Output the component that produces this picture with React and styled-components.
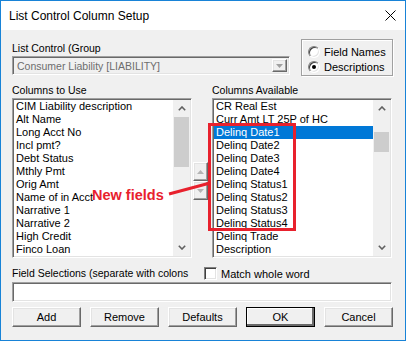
import React from "react";
import styled, { createGlobalStyle } from "styled-components";

const GlobalStyle = createGlobalStyle`
  body {
    margin: 0;
    background: #ffffff;
  }
`;

const sunken = `
  border-top: 1px solid #a0a0a0;
  border-left: 1px solid #a0a0a0;
  border-bottom: 1px solid #ffffff;
  border-right: 1px solid #ffffff;
  box-shadow: inset 1px 1px 0 #696969, inset -1px -1px 0 #e3e3e3;
`;

const raised = `
  border-top: 1px solid #ffffff;
  border-left: 1px solid #ffffff;
  border-bottom: 1px solid #696969;
  border-right: 1px solid #696969;
  box-shadow: inset -1px -1px 0 #a0a0a0, inset 1px 1px 0 #e3e3e3;
`;

const Window = styled.div`
  position: relative;
  width: 406px;
  height: 341px;
  box-sizing: border-box;
  border: 1px solid #1883d7;
  background: #f0f0f0;
  font-family: "Liberation Sans", Arial, sans-serif;
  font-size: 10.5px;
  color: #000;
`;

const TitleBar = styled.div`
  display: flex;
  align-items: center;
  height: 29px;
  padding: 0 9px 0 8px;
  background: #ffffff;
  font-size: 12px;
`;

const CloseIcon = styled.svg`
  margin-left: auto;
  width: 11px;
  height: 11px;
`;

const Body = styled.div`
  padding: 9px 0 0 11px;
`;

const TopRow = styled.div`
  display: flex;
  height: 37px;
`;

const LeftCol = styled.div`
  display: flex;
  flex-direction: column;
  width: 278px;
  padding-top: 3px;
`;

const Label = styled.div`
  height: 14px;
  line-height: 13px;
  white-space: nowrap;
`;

const Combo = styled.div`
  display: flex;
  align-items: center;
  box-sizing: border-box;
  height: 19px;
  padding: 0 2px 0 4px;
  color: #6d6d6d;
  ${sunken}
`;

const ComboButton = styled.div`
  display: flex;
  align-items: center;
  justify-content: center;
  box-sizing: border-box;
  margin-left: auto;
  width: 15px;
  height: 13px;
  background: #f0f0f0;
  ${raised}
`;

const GroupBox = styled.div`
  box-sizing: border-box;
  margin-left: 11px;
  width: 92px;
  height: 37px;
  padding: 4px 0 0 6px;
  border: 1px solid #a0a0a0;
  box-shadow: inset 1px 1px 0 #ffffff, 1px 1px 0 #ffffff;
`;

const RadioRow = styled.div`
  display: flex;
  align-items: center;
  gap: 4px;
  height: 15px;
  white-space: nowrap;
  font-size: 11px;
`;

const RadioCircle = styled.span`
  display: flex;
  align-items: center;
  justify-content: center;
  box-sizing: border-box;
  width: 12px;
  height: 12px;
  border-radius: 50%;
  background: #ffffff;
  border: 1px solid;
  border-color: #808080 #ffffff #ffffff #808080;
  box-shadow: inset 1px 1px 0 #404040, inset -1px -1px 0 #e3e3e3;

  &::after {
    content: "";
    width: 4px;
    height: 4px;
    border-radius: 50%;
    background: ${(p) => (p.$checked ? "#000" : "transparent")};
  }
`;

const ListsGrid = styled.div`
  display: grid;
  grid-template-columns: 180px 20px 180px;
  grid-template-rows: 14px 160px;
  margin-top: 8px;
`;

const ListBox = styled.div`
  display: flex;
  box-sizing: border-box;
  height: 160px;
  background: #ffffff;
  ${sunken}
  padding: 1px;
`;

const ListItems = styled.div`
  flex: 1;
  overflow: hidden;
`;

const Item = styled.div`
  height: 13px;
  line-height: 13px;
  padding-left: 2px;
  white-space: nowrap;
  font-size: 11px;
  background: ${(p) => (p.$selected ? "#0078d7" : "transparent")};
  color: ${(p) => (p.$selected ? "#ffffff" : "#000")};
`;

const ScrollBar = styled.div`
  display: flex;
  flex-direction: column;
  width: 17px;
  background: #f0f0f0;
`;

const ScrollArrow = styled.div`
  display: flex;
  align-items: center;
  justify-content: center;
  height: 17px;
`;

const Track = styled.div`
  flex: 1;
  padding-top: ${(p) => p.$offset}px;
`;

const Thumb = styled.div`
  height: ${(p) => p.$size}px;
  margin: 0 1px;
  background: #cdcdcd;
`;

const MoveCol = styled.div`
  display: flex;
  flex-direction: column;
  padding: 64px 0 0 1px;
`;

const MoveButton = styled.div`
  display: flex;
  align-items: center;
  justify-content: center;
  box-sizing: border-box;
  width: 15px;
  height: 19px;
  background: #f0f0f0;
  ${raised}
`;

const FieldRow = styled.div`
  display: flex;
  align-items: flex-start;
  height: 20px;
  margin-top: 4px;
`;

const FieldLabel = styled.div`
  width: 180px;
  height: 15px;
  margin-top: 5px;
  line-height: 13px;
  overflow: hidden;
`;

const CheckLabel = styled.label`
  display: flex;
  align-items: center;
  gap: 4px;
  margin: 5px 0 0 12px;
  font-size: 11px;
`;

const CheckBox = styled.span`
  box-sizing: border-box;
  width: 13px;
  height: 13px;
  background: #ffffff;
  border: 1px solid;
  border-color: #808080 #ffffff #ffffff #808080;
  box-shadow: inset 1px 1px 0 #404040, inset -1px -1px 0 #e3e3e3;
`;

const TextInput = styled.div`
  box-sizing: border-box;
  width: 380px;
  height: 20px;
  background: #ffffff;
  ${sunken}
`;

const ButtonRow = styled.div`
  display: flex;
  justify-content: space-between;
  width: 381px;
  margin-top: 5px;
`;

const Button = styled.div`
  display: flex;
  align-items: center;
  justify-content: center;
  box-sizing: border-box;
  width: 69px;
  height: 20px;
  background: #f0f0f0;
  font-size: 11px;
  ${raised}
  ${(p) =>
    p.$default &&
    `
    outline: 1px solid #000;
    outline-offset: -1px;
    box-shadow: inset -2px -2px 0 #696969, inset 1px 1px 0 #ffffff;
  `}
`;

const MarkBox = styled.div`
  position: absolute;
  left: 207px;
  top: 122px;
  width: 88px;
  height: 108px;
  box-sizing: border-box;
  border: 3px solid #e8212d;
`;

const MarkText = styled.div`
  position: absolute;
  left: 91px;
  top: 186px;
  font-size: 14.5px;
  font-weight: bold;
  line-height: 16px;
  color: #e8212d;
  white-space: nowrap;
`;

const MarkArrow = styled.svg`
  position: absolute;
  left: 165px;
  top: 178px;
  width: 45px;
  height: 20px;
  overflow: visible;
`;

const Chevron = ({ down }) => (
  <svg width="8" height="5" viewBox="0 0 8 5">
    <polyline
      points={down ? "0.8,0.8 4,4 7.2,0.8" : "0.8,4.2 4,1 7.2,4.2"}
      fill="none"
      stroke="#606060"
      strokeWidth="1.6"
    />
  </svg>
);

const Triangle = ({ down, color = "#a0a0a0" }) => (
  <svg width="7" height="4" viewBox="0 0 7 4">
    <polygon points={down ? "0,0 7,0 3.5,4" : "0,4 7,4 3.5,0"} fill={color} />
  </svg>
);

function List({ items, selected, thumbOffset, thumbSize }) {
  return (
    <ListBox>
      <ListItems>
        {items.map((it) => (
          <Item key={it} $selected={it === selected}>
            {it}
          </Item>
        ))}
      </ListItems>
      <ScrollBar>
        <ScrollArrow>
          <Chevron />
        </ScrollArrow>
        <Track $offset={thumbOffset}>
          <Thumb $size={thumbSize} />
        </Track>
        <ScrollArrow>
          <Chevron down />
        </ScrollArrow>
      </ScrollBar>
    </ListBox>
  );
}

const usedColumns = [
  "CIM Liability description",
  "Alt Name",
  "Long Acct No",
  "Incl pmt?",
  "Debt Status",
  "Mthly Pmt",
  "Orig Amt",
  "Name of in Acct",
  "Narrative 1",
  "Narrative 2",
  "High Credit",
  "Finco Loan",
];

const availableColumns = [
  "CR Real Est",
  "Curr Amt LT 25P of HC",
  "Delinq Date1",
  "Delinq Date2",
  "Delinq Date3",
  "Delinq Date4",
  "Delinq Status1",
  "Delinq Status2",
  "Delinq Status3",
  "Delinq Status4",
  "Delinq Trade",
  "Description",
];

export default function App() {
  return (
    <>
      <GlobalStyle />
      <Window>
        <TitleBar>
          List Control Column Setup
          <CloseIcon viewBox="0 0 11 11">
            <path d="M0.5 0.5 L10.5 10.5 M10.5 0.5 L0.5 10.5" stroke="#000" strokeWidth="1" />
          </CloseIcon>
        </TitleBar>
        <Body>
          <TopRow>
            <LeftCol>
              <Label>List Control (Group</Label>
              <Combo>
                Consumer Liability [LIABILITY]
                <ComboButton>
                  <Triangle down />
                </ComboButton>
              </Combo>
            </LeftCol>
            <GroupBox>
              <RadioRow>
                <RadioCircle />
                Field Names
              </RadioRow>
              <RadioRow>
                <RadioCircle $checked />
                Descriptions
              </RadioRow>
            </GroupBox>
          </TopRow>

          <ListsGrid>
            <Label>Columns to Use</Label>
            <div />
            <Label>Columns Available</Label>
            <List items={usedColumns} thumbOffset={0} thumbSize={50} />
            <MoveCol>
              <MoveButton>
                <Triangle color="#b4b4b4" />
              </MoveButton>
              <MoveButton>
                <Triangle down color="#b4b4b4" />
              </MoveButton>
            </MoveCol>
            <List
              items={availableColumns}
              selected="Delinq Date1"
              thumbOffset={15}
              thumbSize={20}
            />
          </ListsGrid>

          <FieldRow>
            <FieldLabel>Field Selections (separate with colons :)</FieldLabel>
            <CheckLabel>
              <CheckBox />
              Match whole word
            </CheckLabel>
          </FieldRow>
          <TextInput />
          <ButtonRow>
            <Button>Add</Button>
            <Button>Remove</Button>
            <Button>Defaults</Button>
            <Button $default>OK</Button>
            <Button>Cancel</Button>
          </ButtonRow>
        </Body>

        <MarkBox />
        <MarkArrow viewBox="0 0 45 20">
          <line x1="3" y1="15" x2="44" y2="4" stroke="#e8212d" strokeWidth="3" />
        </MarkArrow>
        <MarkText>New fields</MarkText>
      </Window>
    </>
  );
}
